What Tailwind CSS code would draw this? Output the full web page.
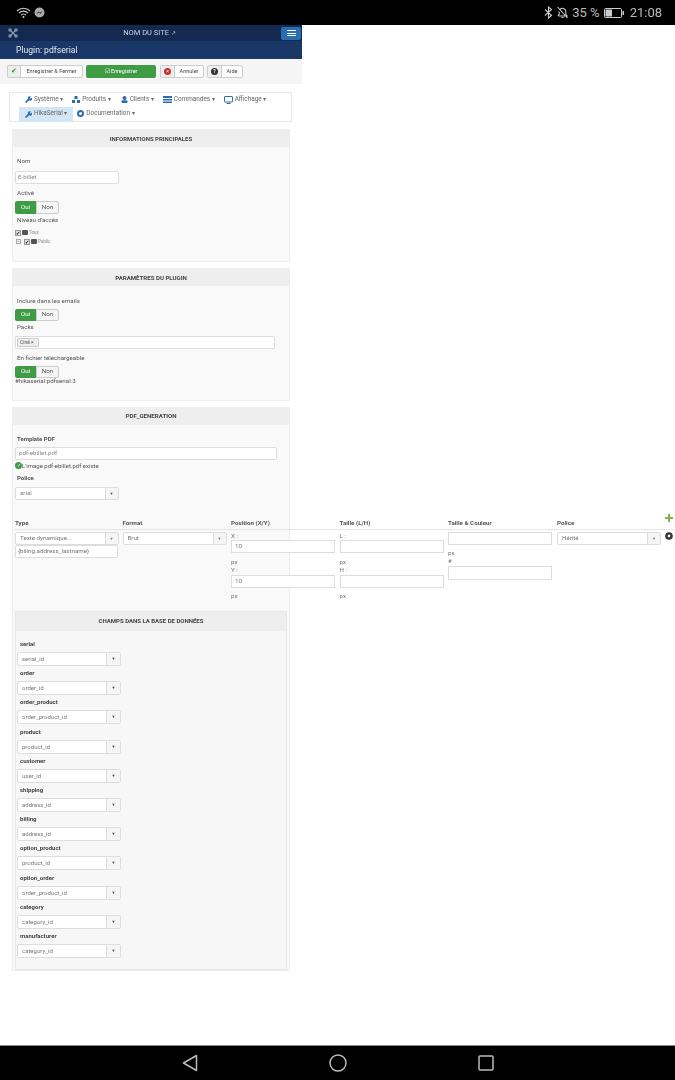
<!DOCTYPE html>
<html lang="fr">
<head>
    <meta charset="UTF-8">
    <meta name="viewport" content="width=device-width, initial-scale=1.0">
    <script src="https://cdn.jsdelivr.net/npm/@tailwindcss/browser@4"></script>
    <title>Plugin: pdfserial</title>
</head>
<body class="font-[Roboto,sans-serif] bg-white text-[#555] overflow-hidden">
<div class="w-[675px] h-[1080px] flex flex-col overflow-hidden blur-[0.3px]">
    <!-- android status bar -->
    <div class="h-[25px] shrink-0 bg-black flex items-center justify-between pl-[16px] pr-[13px] text-[#bbb]">
        <div class="flex items-center gap-[3px]">
            <svg width="15" height="13" viewBox="0 0 15 13" fill="none" stroke="#ccc" stroke-width="1.1"><path d="M1 5a9 9 0 0 1 13 0M3 7.2a6 6 0 0 1 9 0M5 9.300a3 3 0 0 1 5 0"/><circle cx="7.500" cy="11" r="1" fill="#ccc" stroke="none"/></svg>
            <svg width="11" height="11" viewBox="0 0 11 11"><circle cx="5.500" cy="5.500" r="5" fill="#aaa"/><path d="M2.500 7l2-2.500 1.500 1.200L8.500 4 6.500 6.800 5 5.500z" fill="#111"/></svg>
        </div>
        <div class="flex items-center gap-[3px] text-[13px] leading-none">
            <svg width="9" height="13" viewBox="0 0 9 13" fill="none" stroke="#ccc" stroke-width="1.100"><path d="M1 3.500l6.500 6L4.500 12V1l3 2.500L1 9.500"/></svg>
            <svg width="13" height="13" viewBox="0 0 13 13" fill="none" stroke="#ccc" stroke-width="1.100"><path d="M2.500 10h8.500L9.800 8V5.500A3.300 3.300 0 0 0 4 3.500M3.200 5.500V8L2 10M5.500 11.500h2M1.500 1l10 11"/></svg>
            <span>35 %</span>
            <svg width="20" height="10" viewBox="0 0 20 10" class="ml-[1px]"><rect x=".5" y=".5" width="17" height="9" rx="1" fill="none" stroke="#ccc"/><rect x="1.500" y="1.500" width="6.500" height="7" fill="#ccc"/><rect x="18.500" y="3" width="1.500" height="4" fill="#ccc"/></svg>
            <span class="ml-[3px]">21:08</span>
        </div>
    </div>

    <div class="flex-1 min-h-0 relative">
        <!-- joomla header -->
        <div class="w-[302px] h-[16px] bg-[#13294f] flex items-center justify-between pl-[8px] pr-[1px]">
            <svg width="10" height="10" viewBox="0 0 10 10" fill="none" stroke="#8a97ab" stroke-width="1.300"><path d="M2 2l6 6M8 2L2 8"/><circle cx="2" cy="2" r="1.100"/><circle cx="8" cy="2" r="1.100"/><circle cx="2" cy="8" r="1.100"/><circle cx="8" cy="8" r="1.100"/></svg>
            <div class="text-[7.500px] font-normal text-[#c9d1dd]">NOM DU SITE <span class="text-[6px]">↗</span></div>
            <div class="w-[20px] h-[13px] rounded-[2px] bg-[#2a6db0] flex flex-col items-center justify-center gap-[1.500px]">
                <span class="block w-[9px] h-[1px] bg-white"></span>
                <span class="block w-[9px] h-[1px] bg-white"></span>
                <span class="block w-[9px] h-[1px] bg-white"></span>
            </div>
        </div>
        <div class="w-[302px] h-[18px] bg-[#1a3867] pl-[16px] pt-[1px] flex items-center text-[8.600px] text-[#e4e9f0]">Plugin: pdfserial</div>

        <!-- toolbar -->
        <div class="w-[302px] h-[25px] bg-[#f5f5f5] flex items-center pl-[7px] text-[5.500px] text-[#444]">
            <div class="flex h-[13px] border border-[#ccc] rounded-[2px] bg-white">
                <span class="w-[13px] bg-[#eee] border-r border-[#ccc] flex items-center justify-center text-[#3d8b3d] text-[7px]">✔</span>
                <span class="w-[61px] flex items-center justify-center">Enregistrer &amp; Fermer</span>
            </div>
            <div class="ml-[3px] w-[70px] h-[13px] bg-[#3f9c45] rounded-[2px] text-white flex items-center justify-center">☑ Enregistrer</div>
            <div class="ml-[4px] flex h-[13px] border border-[#ccc] rounded-[2px] bg-white">
                <span class="w-[14px] bg-[#eee] border-r border-[#ccc] flex items-center justify-center"><span class="w-[7px] h-[7px] rounded-full bg-[#bd362f] text-white text-[5px] leading-[7px] text-center">×</span></span>
                <span class="w-[28px] flex items-center justify-center">Annuler</span>
            </div>
            <div class="ml-[3px] flex h-[13px] border border-[#ccc] rounded-[2px] bg-white">
                <span class="w-[14px] bg-[#eee] border-r border-[#ccc] flex items-center justify-center"><span class="w-[7px] h-[7px] rounded-full bg-[#333] text-white text-[5px] leading-[7px] text-center font-bold">?</span></span>
                <span class="w-[20px] flex items-center justify-center">Aide</span>
            </div>
        </div>

        <!-- menu -->
        <div class="ml-[9px] mt-[8px] w-[283px] h-[30px] border border-[#e8e8e8] bg-white text-[6.400px] text-[#666]">
            <div class="h-[14px] flex items-center gap-[9px] pl-[15px]">
                <span class="flex items-center gap-[2px]"><svg width="7" height="7" viewBox="0 0 7 7"><path d="M0 6l3-3.200A2 2 0 0 1 6 .5L4.800 2l.7.7L7 1.500A2 2 0 0 1 4.300 4.300L1 7z" fill="#2a6db0"/></svg>Système ▾</span>
                <span class="flex items-center gap-[2px]"><svg width="8" height="7" viewBox="0 0 8 7"><rect x="2.500" y="0" width="3" height="3" fill="#2a6db0"/><rect x="0" y="4" width="3" height="3" fill="#2a6db0"/><rect x="5" y="4" width="3" height="3" fill="#2a6db0"/></svg>Produits ▾</span>
                <span class="flex items-center gap-[2px] ml-[1px]"><svg width="7" height="7" viewBox="0 0 7 7"><circle cx="3.500" cy="2" r="2" fill="#2a6db0"/><rect x="0.500" y="4.300" width="6" height="2.700" rx="1" fill="#2a6db0"/></svg>Clients ▾</span>
                <span class="flex items-center gap-[2px]"><svg width="9" height="7" viewBox="0 0 9 7"><rect width="9" height="2" fill="#2a6db0"/><rect y="3" width="9" height="1.500" fill="#2a6db0"/><rect y="5.500" width="9" height="1.500" fill="#2a6db0"/></svg>Commandes ▾</span>
                <span class="flex items-center gap-[2px]"><svg width="9" height="8" viewBox="0 0 9 8"><rect x=".5" y=".5" width="8" height="5.500" rx=".5" fill="none" stroke="#2a6db0"/><rect x="2.500" y="7" width="4" height="1" fill="#2a6db0"/></svg>Affichage ▾</span>
            </div>
            <div class="h-[14px] flex items-center gap-[4px] pl-[9px]">
                <span class="h-[15px] px-[6px] bg-[#d2e6f5] flex items-center gap-[2px]"><svg width="7" height="7" viewBox="0 0 7 7"><path d="M0 6l3-3.200A2 2 0 0 1 6 .5L4.800 2l.7.7L7 1.500A2 2 0 0 1 4.300 4.300L1 7z" fill="#2a6db0"/></svg>HikaSerial ▾</span>
                <span class="flex items-center gap-[2px]"><svg width="7" height="7" viewBox="0 0 7 7"><circle cx="3.500" cy="3.500" r="2.500" fill="none" stroke="#2a6db0" stroke-width="2"/></svg>Documentation ▾</span>
            </div>
        </div>

        <!-- informations principales -->
        <section class="ml-[12px] mt-[7px] w-[278px] h-[133px] bg-[#f9f9f9] border border-[#eee] text-[6.200px]">
            <h3 class="h-[17px] bg-[#eee] flex items-center justify-center font-bold text-[6px] text-[#444]">INFORMATIONS PRINCIPALES</h3>
            <div class="pl-[2px] pr-[3px]">
                <div class="h-[10px] mt-[10px] pl-[2px] leading-[9px]">Nom</div>
                <div class="mt-[4px] w-[103.500px] h-[13px] bg-white border border-[#ddd] rounded-[2px] pl-[2px] leading-[11px] text-[#888]">E-billet</div>
                <div class="h-[10px] mt-[4px] pl-[2px] leading-[10px]">Activé</div>
                <div class="mt-[3px] flex w-[44px] h-[13px]"><span class="w-[21px] bg-[#3f9c45] text-white flex items-center justify-center rounded-l-[2px]">Oui</span><span class="w-[23px] bg-[#f5f5f5] border border-[#ccc] flex items-center justify-center rounded-r-[2px]">Non</span></div>
                <div class="h-[10px] mt-[1px] pl-[2px] leading-[10px]">Niveau d'accès</div>
                <div class="mt-[3px] flex items-center gap-[1px] h-[9px] leading-[9px] text-[4.500px] text-[#888]">
                    <span class="w-[6px] h-[6px] bg-[#ddd] border border-[#999] text-[#222] text-[5px] leading-[4px]">✔</span>
                    <span class="w-[6px] h-[5px] bg-[#555] rounded-[1px]"></span><span>Tous</span>
                </div>
                <div class="flex items-center gap-[1px] h-[9px] leading-[9px] text-[4.500px] text-[#888]">
                    <span class="w-[5px] h-[5px] border border-[#aaa] text-[4px] leading-[3px] text-center ml-[1px] mr-[2px]">+</span>
                    <span class="w-[6px] h-[6px] bg-[#ddd] border border-[#999] text-[#222] text-[5px] leading-[4px]">✔</span>
                    <span class="w-[6px] h-[5px] bg-[#555] rounded-[1px]"></span><span>Public</span>
                </div>
            </div>
        </section>

        <!-- parametres du plugin -->
        <section class="ml-[12px] mt-[6px] w-[278px] h-[133px] bg-[#f9f9f9] border border-[#eee] text-[6.200px]">
            <h3 class="h-[17px] bg-[#eee] flex items-center justify-center font-bold text-[6.100px] text-[#444]">PARAMÈTRES DU PLUGIN</h3>
            <div class="pl-[2px]">
                <div class="h-[10px] mt-[10px] pl-[2px] leading-[10px]">Inclure dans les emails</div>
                <div class="mt-[3px] flex w-[44px] h-[12px]"><span class="w-[21px] bg-[#3f9c45] text-white flex items-center justify-center rounded-l-[2px]">Oui</span><span class="w-[23px] bg-[#f5f5f5] border border-[#ccc] flex items-center justify-center rounded-r-[2px]">Non</span></div>
                <div class="h-[10px] mt-[1px] pl-[2px] leading-[10px]">Packs</div>
                <div class="mt-[4px] w-[260px] h-[13px] bg-white border border-[#ddd] rounded-[1px] flex items-center pl-[1px]"><span class="w-[22px] h-[9px] pl-[2px] bg-[#eee] border border-[#ccc] rounded-[1px] text-[5px] leading-[7px]">Ciné ×</span></div>
                <div class="h-[10px] mt-[4px] pl-[2px] leading-[10px]">En fichier téléchargeable</div>
                <div class="mt-[3px] flex w-[44px] h-[12px]"><span class="w-[21px] bg-[#3f9c45] text-white flex items-center justify-center rounded-l-[2px]">Oui</span><span class="w-[23px] bg-[#f5f5f5] border border-[#ccc] flex items-center justify-center rounded-r-[2px]">Non</span></div>
                <div class="h-[8px] leading-[6px]">#hikaserial:pdfserial:3</div>
            </div>
        </section>

        <!-- pdf generation -->
        <section class="ml-[12px] mt-[6px] w-[278px] h-[564px] bg-[#f9f9f9] border border-[#eee] text-[6.200px]">
            <h3 class="h-[17px] pb-[1px] bg-[#eee] flex items-center justify-center font-bold text-[6.100px] text-[#444]">PDF_GENERATION</h3>
            <div class="pl-[2px]">
                <div class="h-[10px] mt-[9px] pl-[2px] leading-[10px] font-bold text-[6px] text-[#555]">Template PDF</div>
                <div class="mt-[3px] w-[262px] h-[13px] bg-white border border-[#ddd] rounded-[2px] pl-[3px] leading-[11px] text-[#888]">pdf-ebillet.pdf</div>
                <div class="mt-[1px] h-[9px] flex items-center text-[6px]"><span class="w-[7px] h-[7px] rounded-full bg-[#3f9c45] text-white text-[5px] leading-[7px] text-center">✓</span>L'image pdf-ebillet.pdf existe</div>
                <div class="h-[10px] mt-[4px] pl-[2px] leading-[8px] font-bold text-[6px] text-[#555]">Police</div>
                <div class="mt-[3px] w-[103.500px] h-[13px] bg-white border border-[#ddd] rounded-[2px] flex text-[#888]"><span class="flex-1 pl-[4px] leading-[11px]">arial</span><span class="w-[13px] bg-[#f5f5f5] border-l border-[#ddd] text-center text-[4px] leading-[11px] text-[#555]">▼</span></div>

                <!-- wide row, runs out of the section like the original table -->
                <div class="mt-[19px] w-[660px] flex h-[11px] border-b border-[#e5e5e5] font-bold text-[6.200px] text-[#555]">
                    <span class="w-[107.500px]">Type</span><span class="w-[108.500px]">Format</span><span class="w-[108.500px]">Position (X/Y)</span><span class="w-[108.500px]">Taille (L/H)</span><span class="w-[109px]">Taille &amp; Couleur</span><span>Police</span>
                </div>
                <div class="w-[660px] flex h-[81px] text-[#777] relative">
                    <div class="w-[107.500px] pt-[2px]">
                        <div class="w-[103.500px] h-[13px] bg-white border border-[#ddd] rounded-[2px] flex"><span class="flex-1 pl-[4px] leading-[11px]">Texte dynamique...</span><span class="w-[13px] bg-[#f5f5f5] border-l border-[#ddd] text-center text-[4px] leading-[11px]">▼</span></div>
                        <div class="w-[103px] h-[13px] bg-white border border-[#ddd] rounded-[2px] pl-[2px] leading-[11px]">{biling.address_lastname}</div>
                    </div>
                    <div class="w-[108.500px] pt-[2px]">
                        <div class="w-[104px] h-[13px] bg-white border border-[#ddd] rounded-[2px] flex"><span class="flex-1 pl-[4px] leading-[11px]">Brut</span><span class="w-[13px] bg-[#f5f5f5] border-l border-[#ddd] text-center text-[4px] leading-[11px]">▼</span></div>
                    </div>
                    <div class="w-[108.500px] leading-[8px] pt-[2px]">
                        <div class="h-[8px]">X :</div>
                        <div class="w-[104px] h-[13px] bg-white border border-[#ddd] pl-[3px] leading-[11px]">10</div>
                        <div class="mt-[5px] h-[8px]">px</div>
                        <div class="h-[8px]">Y :</div>
                        <div class="mt-[1px] w-[104px] h-[13px] bg-white border border-[#ddd] pl-[3px] leading-[11px]">10</div>
                        <div class="mt-[4px] h-[8px]">px</div>
                    </div>
                    <div class="w-[108.500px] leading-[8px] pt-[2px]">
                        <div class="h-[8px]">L :</div>
                        <div class="w-[104px] h-[13px] bg-white border border-[#ddd]"></div>
                        <div class="mt-[5px] h-[8px]">px</div>
                        <div class="h-[8px]">H :</div>
                        <div class="mt-[1px] w-[104px] h-[13px] bg-white border border-[#ddd]"></div>
                        <div class="mt-[4px] h-[8px]">px</div>
                    </div>
                    <div class="w-[109px] leading-[8px] pt-[2px]">
                        <div class="w-[104px] h-[13px] bg-white border border-[#ddd]"></div>
                        <div class="mt-[4px] h-[8px]">px</div>
                        <div class="h-[8px]">#</div>
                        <div class="mt-[1px] w-[104px] h-[14px] bg-white border border-[#ddd]"></div>
                    </div>
                    <div class="pt-[2px]">
                        <div class="w-[104px] h-[13px] bg-white border border-[#ddd] rounded-[2px] flex"><span class="flex-1 pl-[4px] leading-[11px]">Hérité</span><span class="w-[13px] bg-[#f5f5f5] border-l border-[#ddd] text-center text-[4px] leading-[11px]">▼</span></div>
                    </div>
                    <svg class="absolute left-[650px] -top-[16px]" width="8" height="8" viewBox="0 0 8 8"><path d="M3 0h2v3h3v2H5v3H3V5H0V3h3z" fill="#7ab648"/></svg>
                    <svg class="absolute left-[650px] top-[2px]" width="8" height="8" viewBox="0 0 8 8"><circle cx="4" cy="4" r="2.600" fill="none" stroke="#333" stroke-width="2.400"/></svg>
                </div>

                <!-- champs dans la base de donnees -->
                <div class="w-[272px] h-[359px] bg-[#f7f7f7] border border-[#e8e8e8]">
                    <h4 class="h-[19px] pb-[2px] bg-[#eee] flex items-center justify-center font-bold text-[6px] text-[#444]">CHAMPS DANS LA BASE DE DONNÉES</h4>
                    <div class="pl-[1px] pt-[9px] flex flex-col gap-[3.200px] text-[6px] text-[#777]">
                        <div class="h-[26px]"><div class="h-[10px] leading-[8px] pl-[3px] font-bold text-[#444]">serial</div><div class="mt-[2px] w-[104px] h-[14px] bg-white border border-[#ddd] rounded-[2px] flex"><span class="flex-1 pl-[4px] leading-[12px]">serial_id</span><span class="w-[14px] bg-[#f5f5f5] border-l border-[#ddd] text-center text-[4px] leading-[12px] text-[#444]">▼</span></div></div>
                        <div class="h-[26px]"><div class="h-[10px] leading-[8px] pl-[3px] font-bold text-[#444]">order</div><div class="mt-[2px] w-[104px] h-[14px] bg-white border border-[#ddd] rounded-[2px] flex"><span class="flex-1 pl-[4px] leading-[12px]">order_id</span><span class="w-[14px] bg-[#f5f5f5] border-l border-[#ddd] text-center text-[4px] leading-[12px] text-[#444]">▼</span></div></div>
                        <div class="h-[26px]"><div class="h-[10px] leading-[8px] pl-[3px] font-bold text-[#444]">order_product</div><div class="mt-[2px] w-[104px] h-[14px] bg-white border border-[#ddd] rounded-[2px] flex"><span class="flex-1 pl-[4px] leading-[12px]">order_product_id</span><span class="w-[14px] bg-[#f5f5f5] border-l border-[#ddd] text-center text-[4px] leading-[12px] text-[#444]">▼</span></div></div>
                        <div class="h-[26px]"><div class="h-[10px] leading-[8px] pl-[3px] font-bold text-[#444]">product</div><div class="mt-[2px] w-[104px] h-[14px] bg-white border border-[#ddd] rounded-[2px] flex"><span class="flex-1 pl-[4px] leading-[12px]">product_id</span><span class="w-[14px] bg-[#f5f5f5] border-l border-[#ddd] text-center text-[4px] leading-[12px] text-[#444]">▼</span></div></div>
                        <div class="h-[26px]"><div class="h-[10px] leading-[8px] pl-[3px] font-bold text-[#444]">customer</div><div class="mt-[2px] w-[104px] h-[14px] bg-white border border-[#ddd] rounded-[2px] flex"><span class="flex-1 pl-[4px] leading-[12px]">user_id</span><span class="w-[14px] bg-[#f5f5f5] border-l border-[#ddd] text-center text-[4px] leading-[12px] text-[#444]">▼</span></div></div>
                        <div class="h-[26px]"><div class="h-[10px] leading-[8px] pl-[3px] font-bold text-[#444]">shipping</div><div class="mt-[2px] w-[104px] h-[14px] bg-white border border-[#ddd] rounded-[2px] flex"><span class="flex-1 pl-[4px] leading-[12px]">address_id</span><span class="w-[14px] bg-[#f5f5f5] border-l border-[#ddd] text-center text-[4px] leading-[12px] text-[#444]">▼</span></div></div>
                        <div class="h-[26px]"><div class="h-[10px] leading-[8px] pl-[3px] font-bold text-[#444]">billing</div><div class="mt-[2px] w-[104px] h-[14px] bg-white border border-[#ddd] rounded-[2px] flex"><span class="flex-1 pl-[4px] leading-[12px]">address_id</span><span class="w-[14px] bg-[#f5f5f5] border-l border-[#ddd] text-center text-[4px] leading-[12px] text-[#444]">▼</span></div></div>
                        <div class="h-[26px]"><div class="h-[10px] leading-[8px] pl-[3px] font-bold text-[#444]">option_product</div><div class="mt-[2px] w-[104px] h-[14px] bg-white border border-[#ddd] rounded-[2px] flex"><span class="flex-1 pl-[4px] leading-[12px]">product_id</span><span class="w-[14px] bg-[#f5f5f5] border-l border-[#ddd] text-center text-[4px] leading-[12px] text-[#444]">▼</span></div></div>
                        <div class="h-[26px]"><div class="h-[10px] leading-[8px] pl-[3px] font-bold text-[#444]">option_order</div><div class="mt-[2px] w-[104px] h-[14px] bg-white border border-[#ddd] rounded-[2px] flex"><span class="flex-1 pl-[4px] leading-[12px]">order_product_id</span><span class="w-[14px] bg-[#f5f5f5] border-l border-[#ddd] text-center text-[4px] leading-[12px] text-[#444]">▼</span></div></div>
                        <div class="h-[26px]"><div class="h-[10px] leading-[8px] pl-[3px] font-bold text-[#444]">category</div><div class="mt-[2px] w-[104px] h-[14px] bg-white border border-[#ddd] rounded-[2px] flex"><span class="flex-1 pl-[4px] leading-[12px]">category_id</span><span class="w-[14px] bg-[#f5f5f5] border-l border-[#ddd] text-center text-[4px] leading-[12px] text-[#444]">▼</span></div></div>
                        <div class="h-[26px]"><div class="h-[10px] leading-[8px] pl-[3px] font-bold text-[#444]">manufacturer</div><div class="mt-[2px] w-[104px] h-[14px] bg-white border border-[#ddd] rounded-[2px] flex"><span class="flex-1 pl-[4px] leading-[12px]">category_id</span><span class="w-[14px] bg-[#f5f5f5] border-l border-[#ddd] text-center text-[4px] leading-[12px] text-[#444]">▼</span></div></div>
                    </div>
                </div>
            </div>
        </section>
    </div>

    <!-- android nav bar -->
    <div class="h-[35px] shrink-0 bg-black border-t border-[#888] flex items-center justify-center gap-[131px]">
        <svg width="16" height="18" viewBox="0 0 16 18" fill="none" stroke="#bbb" stroke-width="1.500" stroke-linejoin="round"><path d="M1.500 9L14.500 1.500v15z"/></svg>
        <svg width="18" height="18" viewBox="0 0 18 18" fill="none" stroke="#bbb" stroke-width="1.500"><circle cx="9" cy="9" r="8"/></svg>
        <svg width="16" height="16" viewBox="0 0 16 16" fill="none" stroke="#bbb" stroke-width="1.500"><rect x="1" y="1" width="14" height="14" rx="1"/></svg>
    </div>
</div>
</body>
</html>
